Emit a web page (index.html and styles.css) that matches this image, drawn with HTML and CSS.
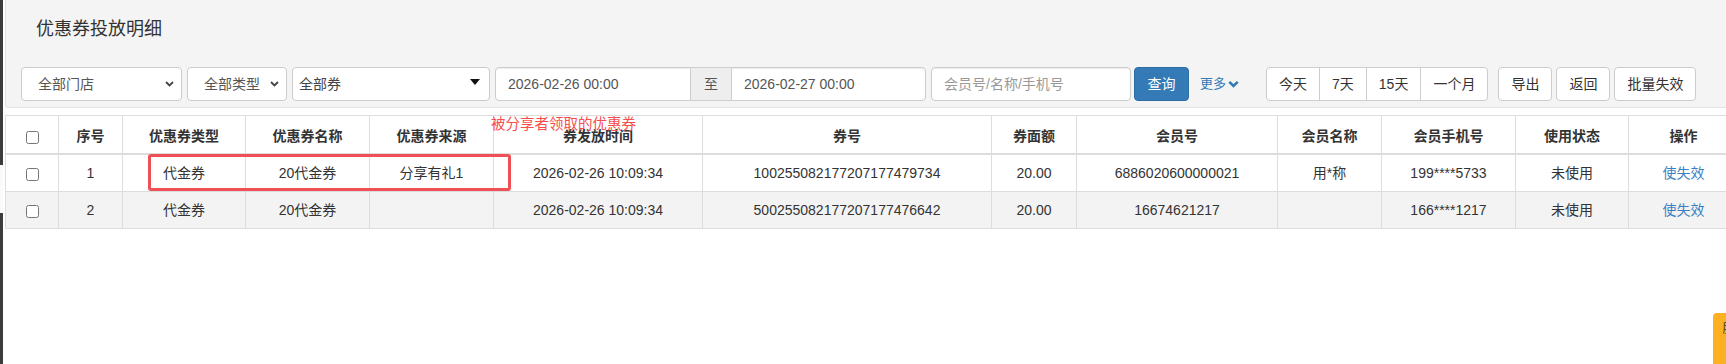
FILE: index.html
```html
<!DOCTYPE html>
<html lang="zh-CN">
<head>
<meta charset="utf-8">
<title>优惠券投放明细</title>
<link rel="stylesheet" href="styles.css">
</head>
<body>
<div class="page">
  <div class="edge"></div>
  <div class="main">
    <div class="panel">
      <h3 class="title">优惠券投放明细</h3>
      <div class="filters">
        <div class="sel sel-store"><span>全部门店</span><svg class="chev" width="9" height="6" viewBox="0 0 9 6"><path d="M1 1l3.5 3.5L8 1" stroke="#444" stroke-width="1.8" fill="none"/></svg></div>
        <div class="sel sel-type"><span>全部类型</span><svg class="chev" width="9" height="6" viewBox="0 0 9 6"><path d="M1 1l3.5 3.5L8 1" stroke="#444" stroke-width="1.8" fill="none"/></svg></div>
        <div class="sel sel-coupon"><span>全部券</span><svg class="tri" width="10" height="6" viewBox="0 0 10 6"><path d="M0 0h10L5 6z" fill="#111"/></svg></div>
        <div class="daterange">
          <input class="inp date date-start" value="2026-02-26 00:00" readonly>
          <span class="addon">至</span>
          <input class="inp date date-end" value="2026-02-27 00:00" readonly>
        </div>
        <input class="inp search" placeholder="会员号/名称/手机号">
        <button class="btn btn-primary">查询</button>
        <a class="more">更多<svg width="11" height="9" viewBox="0 0 11 9"><path d="M1.3 1.8L5.5 6l4.2-4.2" stroke="#337ab7" stroke-width="2.6" fill="none"/></svg></a>
        <div class="group">
          <button class="btn">今天</button><button class="btn">7天</button><button class="btn">15天</button><button class="btn">一个月</button>
        </div>
        <button class="btn act">导出</button>
        <button class="btn act">返回</button>
        <button class="btn act">批量失效</button>
      </div>
    </div>
    <div class="table-wrap">
      <table class="grid">
        <colgroup>
          <col style="width:53px"><col style="width:64px"><col style="width:123px"><col style="width:124px"><col style="width:124px"><col style="width:209px"><col style="width:289px"><col style="width:85px"><col style="width:201px"><col style="width:104px"><col style="width:134px"><col style="width:113px"><col>
        </colgroup>
        <thead>
          <tr>
            <th><input type="checkbox" class="cb"></th>
            <th>序号</th><th>优惠券类型</th><th>优惠券名称</th><th>优惠券来源</th><th>券发放时间</th><th>券号</th><th>券面额</th><th>会员号</th><th>会员名称</th><th>会员手机号</th><th>使用状态</th><th>操作</th>
          </tr>
        </thead>
        <tbody>
          <tr>
            <td><input type="checkbox" class="cb"></td>
            <td>1</td><td>代金券</td><td>20代金券</td><td>分享有礼1</td><td>2026-02-26 10:09:34</td><td>100255082177207177479734</td><td>20.00</td><td>6886020600000021</td><td>用*称</td><td>199****5733</td><td>未使用</td><td><a class="link">使失效</a></td>
          </tr>
          <tr class="alt">
            <td><input type="checkbox" class="cb"></td>
            <td>2</td><td>代金券</td><td>20代金券</td><td></td><td>2026-02-26 10:09:34</td><td>500255082177207177476642</td><td>20.00</td><td>16674621217</td><td></td><td>166****1217</td><td>未使用</td><td><a class="link">使失效</a></td>
          </tr>
        </tbody>
      </table>
      <div class="note">被分享者领取的优惠券</div>
      <div class="mark"></div>
    </div>
  </div>
  <div class="float-tab"><span>在线客服</span></div>
</div>
</body>
</html>
```
FILE: styles.css
```css
* { box-sizing: border-box; }

html, body {
  margin: 0;
  height: 364px;
  overflow: hidden;
}

body {
  font-family: "Liberation Sans", Arial, "Noto Sans CJK SC", sans-serif;
  font-size: 14px;
  line-height: 20px;
  color: #333;
  background: #fff;
}

.page {
  display: flex;
  height: 364px;
  position: relative;
  overflow: hidden;
}

.edge {
  width: 3px;
  flex: none;
  background: linear-gradient(#3c3c3c 0 165px, #fafafa 165px 213px, #3c3c3c 213px);
}

.main {
  flex: 1;
  min-width: 0;
  padding-left: 2px;
}

.panel {
  background: #f4f4f4;
  border: 1px solid #e3e3e3;
  border-top: 0;
  border-right: 0;
  border-radius: 0 0 0 4px;
  padding: 19px 0 6px 15px;
}

.title {
  margin: 0 0 28px 15px;
  font-size: 18px;
  font-weight: normal;
  line-height: 20px;
  color: #333;
}

.filters {
  display: flex;
  align-items: center;
  height: 34px;
}

.sel {
  height: 34px;
  border: 1px solid #ccc;
  border-radius: 4px;
  background: #fff;
  display: flex;
  align-items: center;
  justify-content: space-between;
  padding: 0 7px 0 16px;
  color: #555;
  margin-right: 5px;
  flex: none;
}

.sel-store { width: 161px; }
.sel-type { width: 100px; }
.sel-coupon {
  width: 198px;
  padding: 0 9px 0 6px;
  color: #444;
}
.sel-coupon .tri {
  align-self: flex-start;
  margin-top: 11px;
}

.daterange {
  display: flex;
  margin-right: 5px;
  flex: none;
}

.inp {
  height: 34px;
  border: 1px solid #ccc;
  padding: 6px 12px;
  font: inherit;
  color: #555;
  background: #fff;
  box-shadow: inset 0 1px 1px rgba(0,0,0,.075);
  outline: none;
  margin: 0;
}

.inp::placeholder { color: #999; }

.date { width: 196px; }
.date-start { border-radius: 4px 0 0 4px; }
.date-end { border-radius: 0 4px 4px 0; width: 195px; }

.addon {
  width: 40px;
  height: 34px;
  background: #eee;
  border-top: 1px solid #ccc;
  border-bottom: 1px solid #ccc;
  text-align: center;
  color: #555;
  line-height: 32px;
}

.search {
  width: 200px;
  border-radius: 4px;
  margin-right: 3px;
  flex: none;
}

.btn {
  height: 34px;
  padding: 6px 12px;
  border: 1px solid #ccc;
  background: #fff;
  color: #333;
  border-radius: 4px;
  font: inherit;
  line-height: 20px;
  margin: 0;
  flex: none;
  white-space: nowrap;
}

.btn-primary {
  background: #337ab7;
  border-color: #2e6da4;
  color: #fff;
  width: 55px;
  margin-right: 11px;
}

.more {
  color: #337ab7;
  font-size: 13px;
  display: flex;
  align-items: center;
  gap: 2px;
  margin-right: 27px;
  flex: none;
}

.group {
  display: flex;
  margin-right: 10px;
  flex: none;
}

.group .btn { border-radius: 0; margin-left: -1px; }
.group .btn:first-child { border-radius: 4px 0 0 4px; margin-left: 0; }
.group .btn:last-child { border-radius: 0 4px 4px 0; }

.act { margin-right: 4px; }

.table-wrap {
  position: relative;
  margin-top: 7px;
}

.grid {
  border-collapse: collapse;
  table-layout: fixed;
  width: 1734px;
}

.grid th,
.grid td {
  border: 1px solid #ddd;
  padding: 8px;
  text-align: center;
  vertical-align: middle;
  line-height: 20px;
  white-space: nowrap;
  overflow: hidden;
}

.grid thead th {
  border-bottom-width: 2px;
  font-weight: bold;
  padding: 10px 8px 7px;
}

.grid tr.alt td { background: #f3f3f3; }

.cb {
  width: 13px;
  height: 13px;
  margin: 0;
  vertical-align: middle;
}

.link { color: #3a7fc4; }

.note {
  position: absolute;
  left: 486px;
  top: -1px;
  color: #f74d4d;
  font-size: 14.5px;
  line-height: 20px;
}

.mark {
  position: absolute;
  left: 143px;
  top: 39px;
  width: 363px;
  height: 37px;
  border: 3px solid #ef5056;
  border-radius: 3px;
}

.float-tab {
  position: absolute;
  right: 0;
  bottom: 0;
  width: 13px;
  height: 51px;
  background: #fdb022;
  border-radius: 4px 0 0 0;
  overflow: hidden;
  padding: 9px 0 0 8px;
}

.float-tab span {
  writing-mode: vertical-rl;
  font-size: 12px;
  line-height: 12px;
  color: #4a3a10;
  display: block;
}
```
